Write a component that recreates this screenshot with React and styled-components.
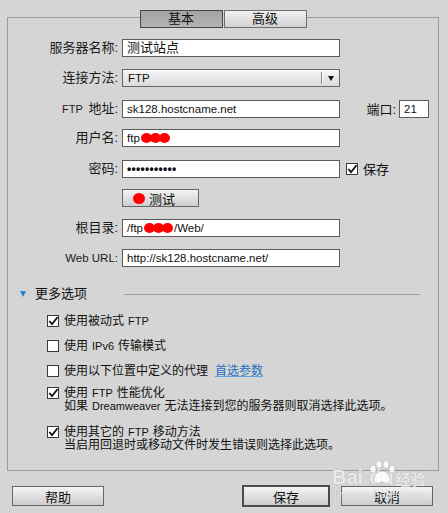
import React from "react";
import styled, { createGlobalStyle, css } from "styled-components";

const GlobalStyle = createGlobalStyle`
  html, body { margin: 0; padding: 0; }
  body {
    background: #d5d5d5;
    font-family: "Liberation Sans", "Noto Sans CJK SC", sans-serif;
    font-size: 12px;
    color: #111;
  }
  * { box-sizing: border-box; }
`;

const Page = styled.div`
  position: relative;
  width: 448px;
  height: 513px;
  padding: 6px 9px 0 7px;
  overflow: hidden;
`;

const Panel = styled.fieldset`
  margin: 0;
  padding: 11px 0 18px;
  min-inline-size: 0;
  border: 1px solid #9d9d9d;
`;

const TabBar = styled.legend`
  display: flex;
  gap: 1px;
  margin: 0 auto;
  padding: 4px 0 0;
`;

const Tab = styled.div`
  width: 83px;
  height: 18px;
  display: flex;
  align-items: center;
  justify-content: center;
  font-size: 13px;
  line-height: 16px;
  border: 1px solid #6f6f6f;
  background: linear-gradient(#f0f0f0, #d2d2d2);
  ${(p) =>
    p.$active &&
    css`
      border-color: #474747;
      background: linear-gradient(#a3a3a3, #b3b3b3);
    `}
`;

const Form = styled.div`
  display: flex;
  flex-direction: column;
  gap: 12px;
`;

const Row = styled.div`
  display: grid;
  grid-template-columns: 110px 218px 85px;
  column-gap: 4px;
  height: 18px;
  align-items: center;
`;

const Label = styled.div`
  text-align: right;
  white-space: nowrap;
  font-size: ${(p) => (p.$latin ? "11.5px" : "13px")};
  line-height: 18px;
  color: #1a1a1a;
`;

const TextBox = styled.div`
  height: 18px;
  border: 1px solid #5b5b5b;
  background: #fff;
  padding: 0 4px;
  display: flex;
  align-items: center;
  font-size: ${(p) => (p.$cjk ? "13px" : "11.5px")};
  line-height: 16px;
  white-space: nowrap;
  overflow: hidden;
  color: #111;
  ${(p) =>
    p.$dots &&
    css`
      font-size: 12px;
      font-weight: bold;
      letter-spacing: 0.3px;
    `}
`;

const Select = styled.div`
  height: 18px;
  border: 1px solid #666;
  background: linear-gradient(#f6f6f6, #dadada);
  display: flex;
  align-items: center;
  padding-left: 5px;
  font-size: 11.5px;
`;

const SelectDivider = styled.span`
  margin-left: auto;
  width: 2px;
  height: 12px;
  border-left: 1px solid #8a8a8a;
  border-right: 1px solid #fafafa;
`;

const SelectArrow = styled.span`
  width: 16px;
  display: flex;
  justify-content: center;
  &::after {
    content: "";
    border-left: 3.5px solid transparent;
    border-right: 3.5px solid transparent;
    border-top: 5px solid #111;
  }
`;

const Extra = styled.div`
  display: flex;
  align-items: center;
  justify-content: ${(p) => (p.$end ? "flex-end" : "flex-start")};
  gap: ${(p) => (p.$end ? "3px" : "5px")};
  padding-left: ${(p) => (p.$end ? "0" : "2px")};
  white-space: nowrap;
  font-size: 13px;
`;

const PortBox = styled(TextBox)`
  width: 30px;
`;

const Redact = styled.span`
  display: inline-flex;
  align-items: center;
  margin: 0 1px;
  & > i {
    display: block;
    width: 11px;
    height: 10px;
    border-radius: 50%;
    background: #f00;
    margin-left: -2px;
  }
  & > i:first-child {
    margin-left: 0;
  }
`;

const Button = styled.div`
  height: ${(p) => (p.$default ? "22px" : "20px")};
  width: ${(p) => p.$w}px;
  display: flex;
  align-items: center;
  justify-content: center;
  font-size: 13px;
  border: ${(p) => (p.$default ? "2px solid #4a4a4a" : "1px solid #666")};
  background: linear-gradient(#f4f4f4, #cdcdcd);
  color: #111;
`;

const TestButton = styled(Button)`
  height: 18px;
  justify-content: flex-start;
  padding-left: 10px;
  gap: 4px;
`;

const RedDot = styled.span`
  width: 12px;
  height: 11px;
  border-radius: 50%;
  background: #f00;
`;

const Box = styled.span`
  width: 12px;
  height: 12px;
  flex: none;
  border: 1px solid #3a3a3a;
  background: #fff;
  display: flex;
  align-items: center;
  justify-content: center;
  & svg {
    display: block;
  }
`;

const MoreHeader = styled.div`
  display: flex;
  align-items: center;
  margin: 20px 18px 0 12px;
  font-size: 13px;
  line-height: 14px;
`;

const Disclosure = styled.span`
  width: 0;
  height: 0;
  border-left: 3.5px solid transparent;
  border-right: 3.5px solid transparent;
  border-top: 6px solid #2b80d0;
  margin-right: 9px;
`;

const HeaderRule = styled.span`
  flex: 1;
  height: 1px;
  background: #9d9d9d;
  margin-left: 37px;
`;

const Options = styled.div`
  display: flex;
  flex-direction: column;
  padding-left: 39px;
  margin-top: 14px;
  gap: 13px;
`;

const OptionGroup = styled.div`
  display: flex;
  flex-direction: column;
  margin-top: ${(p) => (p.$tight ? "-3px" : "0")};
`;

const OptionRow = styled.div`
  display: flex;
  align-items: center;
  gap: 5px;
  font-size: 12px;
  line-height: 12px;
  height: 12px;
  white-space: nowrap;
`;

const Small = styled.span`
  font-size: 11px;
  margin: 0 ${(p) => (p.$tight ? 2 : 4)}px;
`;

const Desc = styled.div`
  padding-left: 17px;
  margin-top: 1px;
  font-size: 12px;
  line-height: 13px;
  height: 13px;
  white-space: nowrap;
`;

const Link = styled.span`
  color: #1f6fc0;
  text-decoration: underline;
  text-decoration-color: #6aa0d8;
  margin-left: 7px;
`;

const Footer = styled.div`
  display: flex;
  align-items: center;
  gap: 11px;
  margin-top: 14px;
  padding: 0 6px 0 5px;
`;

const Spacer = styled.div`
  flex: 1;
`;

const Watermark = styled.div`
  position: absolute;
  left: 332px;
  top: 460px;
  width: 100px;
  height: 52px;
  color: rgba(255, 255, 255, 0.8);
  text-shadow: 0 0 1px rgba(90, 90, 90, 0.45);
  pointer-events: none;
`;

const WmTop = styled.div`
  display: flex;
  align-items: flex-end;
  font-family: "Liberation Sans", sans-serif;
  font-weight: bold;
  font-size: 20px;
  line-height: 22px;
  margin-top: 6px;
`;

const WmCn = styled.span`
  font-family: "Noto Sans CJK SC", sans-serif;
  font-size: 15px;
  font-weight: bold;
  line-height: 18px;
  margin-left: 2px;
`;

const WmUrl = styled.div`
  font-size: 11px;
  line-height: 12px;
  margin-left: 2px;
  letter-spacing: 0.2px;
`;

const Paw = styled.svg`
  position: absolute;
  left: 34px;
  top: 0;
`;

const Check = () => (
  <svg width="10" height="10" viewBox="0 0 10 10">
    <path d="M1.3 5 L4 8 L9.5 1.2" fill="none" stroke="#111" strokeWidth="1.8" />
  </svg>
);

const CheckBox = ({ checked }) => <Box>{checked && <Check />}</Box>;

const Blob = () => (
  <Redact>
    <i />
    <i />
    <i />
  </Redact>
);

export default function App() {
  return (
    <>
      <GlobalStyle />
      <Page>
        <Panel>
          <TabBar>
            <Tab $active>基本</Tab>
            <Tab>高级</Tab>
          </TabBar>
          <Form>
            <Row>
              <Label>服务器名称:</Label>
              <TextBox $cjk>测试站点</TextBox>
            </Row>
            <Row>
              <Label>连接方法:</Label>
              <Select>
                FTP
                <SelectDivider />
                <SelectArrow />
              </Select>
            </Row>
            <Row>
              <Label>
                <Small $tight>FTP</Small> 地址:
              </Label>
              <TextBox>sk128.hostcname.net</TextBox>
              <Extra $end>
                端口:
                <PortBox>21</PortBox>
              </Extra>
            </Row>
            <Row>
              <Label>用户名:</Label>
              <TextBox>
                ftp
                <Blob />
              </TextBox>
            </Row>
            <Row>
              <Label>密码:</Label>
              <TextBox $dots>•••••••••••</TextBox>
              <Extra>
                <CheckBox checked />
                保存
              </Extra>
            </Row>
            <Row>
              <span />
              <div>
                <TestButton $w={77}>
                  <RedDot />
                  测试
                </TestButton>
              </div>
            </Row>
            <Row>
              <Label>根目录:</Label>
              <TextBox>
                /ftp
                <Blob />
                /Web/
              </TextBox>
            </Row>
            <Row>
              <Label $latin>Web URL:</Label>
              <TextBox>http://sk128.hostcname.net/</TextBox>
            </Row>
          </Form>

          <MoreHeader>
            <Disclosure />
            更多选项
            <HeaderRule />
          </MoreHeader>

          <Options>
            <OptionGroup>
              <OptionRow>
                <CheckBox checked />
                <span>
                  使用被动式<Small>FTP</Small>
                </span>
              </OptionRow>
            </OptionGroup>
            <OptionGroup>
              <OptionRow>
                <CheckBox />
                <span>
                  使用<Small>IPv6</Small>传输模式
                </span>
              </OptionRow>
            </OptionGroup>
            <OptionGroup>
              <OptionRow>
                <CheckBox />
                <span>
                  使用以下位置中定义的代理<Link>首选参数</Link>
                </span>
              </OptionRow>
            </OptionGroup>
            <OptionGroup $tight>
              <OptionRow>
                <CheckBox checked />
                <span>
                  使用<Small>FTP</Small>性能优化
                </span>
              </OptionRow>
              <Desc>
                如果<Small>Dreamweaver</Small>无法连接到您的服务器则取消选择此选项。
              </Desc>
            </OptionGroup>
            <OptionGroup>
              <OptionRow>
                <CheckBox checked />
                <span>
                  使用其它的<Small>FTP</Small>移动方法
                </span>
              </OptionRow>
              <Desc>当启用回退时或移动文件时发生错误则选择此选项。</Desc>
            </OptionGroup>
          </Options>
        </Panel>

        <Footer>
          <Button $w={92}>帮助</Button>
          <Spacer />
          <Button $w={88} $default>
            保存
          </Button>
          <Button $w={92}>取消</Button>
        </Footer>

        <Watermark>
          <Paw width="30" height="26" viewBox="0 0 30 26">
            <g fill="rgba(255,255,255,0.85)" stroke="rgba(120,120,120,0.35)" strokeWidth="0.8">
              <ellipse cx="7" cy="9" rx="3" ry="4" />
              <ellipse cx="13" cy="4.5" rx="3" ry="4" />
              <ellipse cx="20" cy="4.5" rx="3" ry="4" />
              <ellipse cx="26" cy="9" rx="3" ry="4" />
              <path d="M16 11 C10 11 7 18 8 21 C9 24 13 23 16 22 C19 23 23 24 24 21 C25 18 22 11 16 11 Z" />
            </g>
          </Paw>
          <WmTop>
            Bai<span style={{ marginLeft: 6 }}>du</span>
            <WmCn>经验</WmCn>
          </WmTop>
          <WmUrl>jingyan.baidu.com</WmUrl>
        </Watermark>
      </Page>
    </>
  );
}
